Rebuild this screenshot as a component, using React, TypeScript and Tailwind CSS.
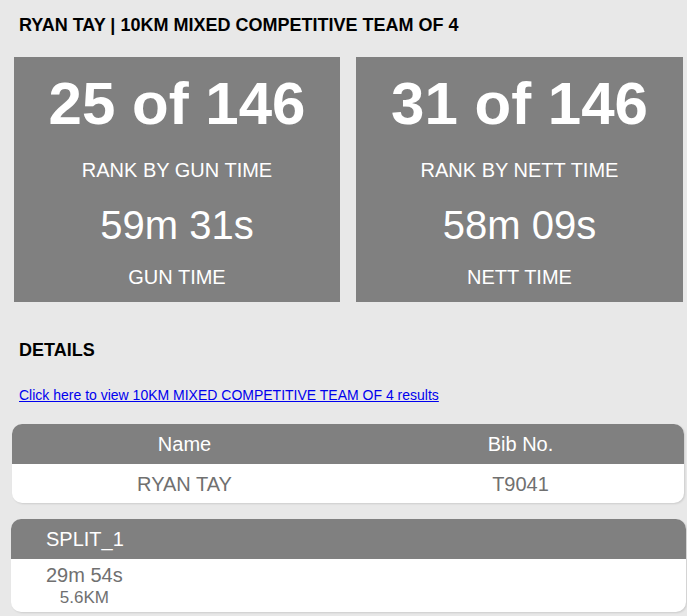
const stats = [
  { rank: "25 of 146", rankLabel: "RANK BY GUN TIME", time: "59m 31s", timeLabel: "GUN TIME", w: "w-[326px]" },
  { rank: "31 of 146", rankLabel: "RANK BY NETT TIME", time: "58m 09s", timeLabel: "NETT TIME", w: "w-[327px]" },
];

const StatCard = ({ s }: { s: (typeof stats)[number] }) => (
  <div className={`${s.w} h-[245px] bg-[#808080] text-white text-center pt-[17px]`}>
    <div className="text-[60px] leading-[60px] font-bold">{s.rank}</div>
    <div className="mt-[26px] text-[20px] leading-[20px]">{s.rankLabel}</div>
    <div className="mt-[25px] text-[40px] leading-[40px]">{s.time}</div>
    <div className="mt-[22px] text-[20px] leading-[20px]">{s.timeLabel}</div>
  </div>
);

export default function App() {
  return (
    <div
      className="w-[687px] h-[616px] overflow-hidden bg-[#e8e8e8] text-black"
      style={{ fontFamily: '"Liberation Sans", Arial, sans-serif' }}
    >
      <h1 className="pl-[19px] pt-[16px] text-[18px] leading-[18px] font-bold">
        RYAN TAY | 10KM MIXED COMPETITIVE TEAM OF 4
      </h1>

      <div className="ml-[14px] mt-[23px] flex gap-4">
        {stats.map((s) => (
          <StatCard key={s.rankLabel} s={s} />
        ))}
      </div>

      <h2 className="pl-[19px] mt-[39px] text-[18px] leading-[18px] font-bold">DETAILS</h2>

      <div className="pl-[19px] mt-[29px] text-[14px] leading-[14px]">
        <a href="#" className="text-[#0000ee] underline">
          Click here to view 10KM MIXED COMPETITIVE TEAM OF 4 results
        </a>
      </div>

      <div className="ml-[12px] mt-[22px] w-[672px] rounded-[10px] overflow-hidden bg-white shadow-[1px_1px_2px_rgba(0,0,0,0.12)]">
        <div className="h-[40px] pl-[5px] grid grid-cols-[335px_337px] items-center bg-[#808080] text-white text-[20px] text-center">
          <div>Name</div>
          <div>Bib No.</div>
        </div>
        <div className="h-[39px] pl-[5px] grid grid-cols-[335px_337px] items-center text-[#707070] text-[20px] text-center">
          <div>RYAN TAY</div>
          <div>T9041</div>
        </div>
      </div>

      <div className="ml-[11px] mt-[16px] w-[675px] rounded-[10px] overflow-hidden bg-white shadow-[1px_1px_2px_rgba(0,0,0,0.12)]">
        <div className="h-[40px] flex items-center pl-[35px] bg-[#808080] text-white text-[20px]">
          SPLIT_1
        </div>
        <div className="h-[53px] pl-[35px] pt-[6px]">
          <div className="inline-block text-center text-[#707070]">
            <div className="text-[20px] leading-[21px]">29m 54s</div>
            <div className="mt-[1px] text-[17px] leading-[21px]">5.6KM</div>
          </div>
        </div>
      </div>
    </div>
  );
}
